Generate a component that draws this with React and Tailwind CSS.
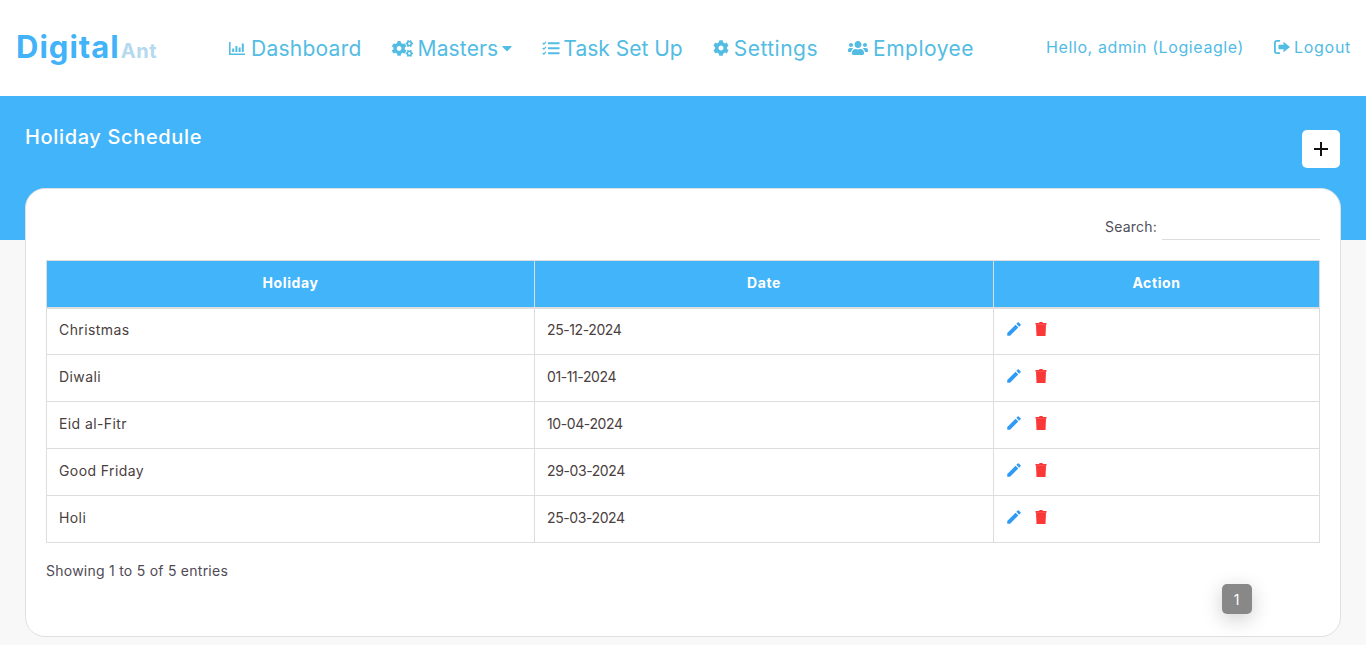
import React from "react";
import { FaCogs, FaCog, FaUsers, FaCaretDown } from "react-icons/fa";
import { MdEdit } from "react-icons/md";

const font = { fontFamily: '"Inter", "Noto Sans", sans-serif' };

const BarIcon = () => (
  <svg width="16" height="13" viewBox="0 0 16 13" fill="currentColor">
    <path d="M0 0h1.6v11.4H16V13H0z" />
    <path d="M3.2 6.5h2v3.6h-2zM6.4 4h2v6.1h-2zM9.600 5.500h2v4.600h-2zM12.800 1.500h2v8.600h-2z" />
  </svg>
);
const TaskIcon = () => (
  <svg width="18" height="14" viewBox="0 0 18 14" fill="none" stroke="currentColor">
    <path d="M0.7 2l1.2 1.2L4 0.8M0.7 7l1.2 1.2L4 5.8M0.7 12l1.2 1.2L4 10.8" strokeWidth="1.2" />
    <path d="M6 2.200h11.500M6 7.200h11.500M6 12.200h11.500" strokeWidth="2" />
  </svg>
);
const LogoutIcon = () => (
  <svg width="16" height="14" viewBox="0 0 16 14" fill="currentColor">
    <path d="M6 0v1.800H3a1.200 1.200 0 0 0-1.200 1.200v8A1.200 1.200 0 0 0 3 12.200H6V14H3a3 3 0 0 1-3-3V3a3 3 0 0 1 3-3z" />
    <path d="M9.500 1.800L16 7l-6.500 5.200V9.200H4.500V4.800h5z" />
  </svg>
);
const BinIcon = () => (
  <svg width="12" height="14" viewBox="0 0 12 14" fill="currentColor" className="text-[#fb3838]">
    <path d="M4.300 0h3.400v1H11.500v1.800H.5V1h3.800z" />
    <path d="M1 2.500h10l-.5 11.500H1.500z" />
  </svg>
);

const nav = [
  { label: "Dashboard", icon: <BarIcon />, cls: "gap-[6px] tracking-[0.25px]" },
  { label: "Masters", icon: <FaCogs size={21} />, cls: "gap-[5px] tracking-[0.15px] -mr-[3px]", caret: true },
  { label: "Task Set Up", icon: <TaskIcon />, cls: "gap-[3px] tracking-[0px]" },
  { label: "Settings", icon: <FaCog size={16} />, cls: "gap-[5px] tracking-[0.5px]" },
  { label: "Employee", icon: <FaUsers size={20} />, cls: "gap-[5px] tracking-[0.5px]" },
];

const rows = [
  ["Christmas", "25-12-2024"],
  ["Diwali", "01-11-2024"],
  ["Eid al-Fitr", "10-04-2024"],
  ["Good Friday", "29-03-2024"],
  ["Holi", "25-03-2024"],
];

export default function App() {
  return (
    <div style={font} className="min-h-[645px] bg-[#f8f8f8]">
      <header className="h-24 bg-white flex items-center">
        <div className="w-[229px] pl-[16px] pb-[3px] flex items-baseline">
          <span className="text-[31px] leading-none font-bold text-[#42b3f9] tracking-[1px]">Digital</span>
          <span className="text-[20px] leading-none font-bold text-[#b5d9ef] tracking-[0.6px] ml-[1px]">Ant</span>
        </div>
        <nav className="flex items-center gap-[30px] text-[#52bce3] text-[21px]">
          {nav.map((n) => (
            <div key={n.label} className={`flex items-center ${n.cls}`}>
              {n.icon}
              <span className="mt-[1px]">{n.label}</span>
              {n.caret && <FaCaretDown size={16} className="-ml-[4px]" />}
            </div>
          ))}
        </nav>
        <div className="ml-auto flex items-center gap-[30px] pr-[15px] pb-[2px] text-[#52bce3] text-[16px]">
          <span className="tracking-[0.6px]">Hello, admin (Logieagle)</span>
          <span className="flex items-center gap-[4px] tracking-[0.7px]">
            <LogoutIcon />
            Logout
          </span>
        </div>
      </header>

      <section className="h-36 bg-[#42b4f9] flex items-start justify-between pl-[25px] pr-[26px] pt-[34px]">
        <h1 className="text-[20px] leading-[14px] font-medium text-white tracking-[0.65px]">Holiday Schedule</h1>
        <button className="w-[38px] h-[38px] bg-white rounded-[5px] text-[#111] flex items-center justify-center">
          <svg width="16" height="16" viewBox="0 0 16 16" stroke="currentColor" strokeWidth="2">
            <path d="M8 1v14M1 8h14" />
          </svg>
        </button>
      </section>

      <main className="ml-[25px] mr-[25px] -mt-[52px] h-[449px] relative bg-white border border-[#e0e0e0] rounded-[20px] px-5 pt-[24px]">
        <div className="flex justify-end items-center h-[26px] text-[14px] text-[#4f4f5a]">
          <span className="tracking-[0.2px]">Search:</span>
          <span className="ml-[5px] w-[158px] h-[26px] mt-[2px] border-b border-[#dddddd]" />
        </div>
        <table className="w-[1273px] mt-[21px] border-collapse table-fixed text-[14px] text-[#4a4040]">
          <colgroup>
            <col className="w-[488px]" />
            <col className="w-[459px]" />
            <col className="w-[326px]" />
          </colgroup>
          <thead>
            <tr className="h-[47px] bg-[#42b4f9] text-white">
              <th className="border border-b-2 border-[#dddddd] pb-[3px] font-bold tracking-[0.6px]">Holiday</th>
              <th className="border border-b-2 border-[#dddddd] pb-[3px] font-bold tracking-[0.6px]">Date</th>
              <th className="border border-b-2 border-[#dddddd] pb-[3px] font-bold tracking-[0.6px]">Action</th>
            </tr>
          </thead>
          <tbody>
            {rows.map(([h, d]) => (
              <tr key={h} className="h-[47px]">
                <td className="border border-[#dddddd] px-3 pb-[3px] tracking-[0.4px]">{h}</td>
                <td className="border border-[#dddddd] px-3 pb-[3px] tracking-[-0.4px]">{d}</td>
                <td className="border border-[#dddddd] px-3">
                  <div className="flex items-center gap-[12px] -mt-[5px] -ml-[1px]">
                    <MdEdit size={18} className="text-[#2f9bf4]" />
                    <BinIcon />
                  </div>
                </td>
              </tr>
            ))}
          </tbody>
        </table>
        <div className="mt-[18px] text-[14px] leading-[20px] text-[#4f4a55] tracking-[0.25px]">Showing 1 to 5 of 5 entries</div>
        <div className="flex justify-end pr-[68px] mt-[3px]">
          <span className="w-[30px] h-[30px] rounded-[5px] bg-[#888888] text-white text-[14px] pr-[1px] flex items-center justify-center shadow-[0_5px_20px_rgba(0,0,0,0.2)]">
            1
          </span>
        </div>
      </main>
    </div>
  );
}
